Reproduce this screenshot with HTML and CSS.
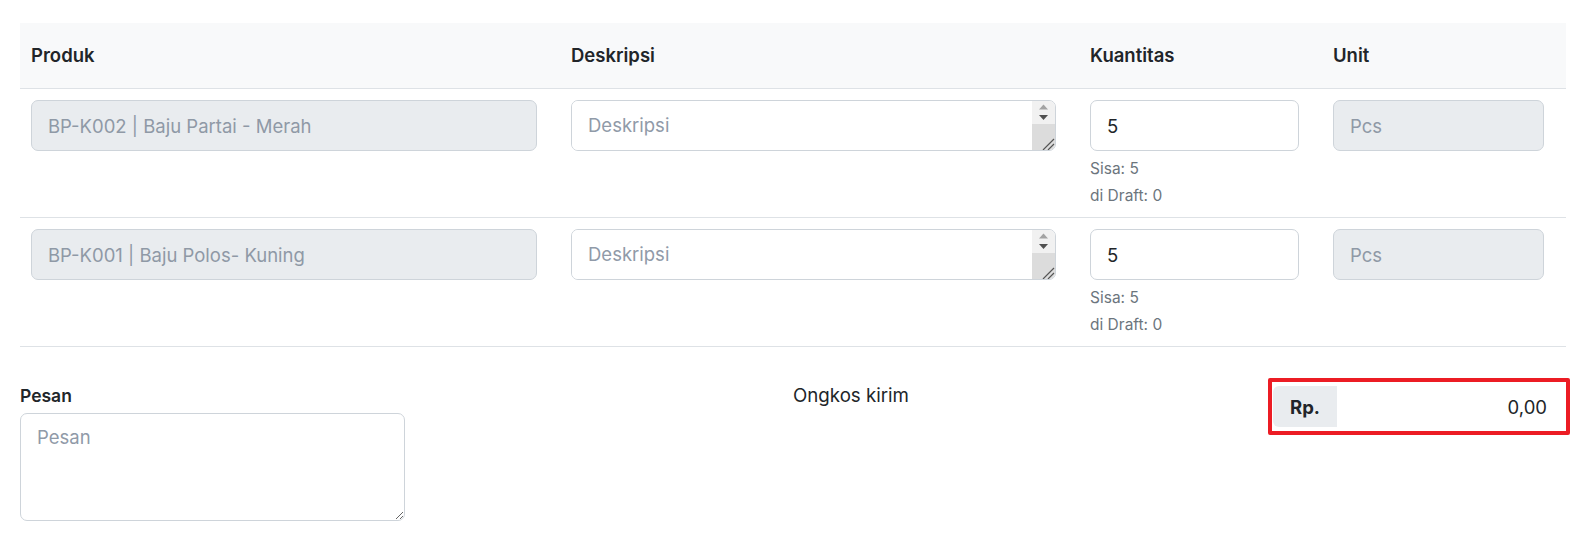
FILE: index.html
```html
<!DOCTYPE html>
<html>
<head>
  <meta charset="utf-8">
  <link rel="stylesheet" href="styles.css">
</head>
<body>
  <div class="page">
    <div class="items">
      <div class="items-head">
        <div>Produk</div>
        <div>Deskripsi</div>
        <div>Kuantitas</div>
        <div>Unit</div>
      </div>

      <div class="item-row">
        <div class="cell">
          <input type="text" class="field field-disabled" value="BP-K002 | Baju Partai - Merah" disabled>
        </div>
        <div class="cell">
          <div class="desc-box">
            <textarea class="desc-input" placeholder="Deskripsi"></textarea>
            <div class="fake-scroll">
              <div class="scroll-track">
                <svg width="23" height="23" viewBox="0 0 23 23"><polygon points="7,8.5 11.5,3.5 16,8.5" fill="#a3a3a3"/><polygon points="7,14 16,14 11.5,19" fill="#505050"/></svg>
              </div>
              <div class="scroll-corner">
                <svg width="23" height="25" viewBox="0 0 23 25"><path d="M22 14 L11 25 M22 19 L16 25" stroke="#555" stroke-width="1.2" fill="none"/></svg>
              </div>
            </div>
          </div>
        </div>
        <div class="cell">
          <input type="text" class="field" value="5">
          <div class="stock-info first">Sisa: 5</div>
          <div class="stock-info">di Draft: 0</div>
        </div>
        <div class="cell">
          <input type="text" class="field field-disabled" value="Pcs" disabled>
        </div>
      </div>

      <div class="item-row">
        <div class="cell">
          <input type="text" class="field field-disabled" value="BP-K001 | Baju Polos- Kuning" disabled>
        </div>
        <div class="cell">
          <div class="desc-box">
            <textarea class="desc-input" placeholder="Deskripsi"></textarea>
            <div class="fake-scroll">
              <div class="scroll-track">
                <svg width="23" height="23" viewBox="0 0 23 23"><polygon points="7,8.5 11.5,3.5 16,8.5" fill="#a3a3a3"/><polygon points="7,14 16,14 11.5,19" fill="#505050"/></svg>
              </div>
              <div class="scroll-corner">
                <svg width="23" height="25" viewBox="0 0 23 25"><path d="M22 14 L11 25 M22 19 L16 25" stroke="#555" stroke-width="1.2" fill="none"/></svg>
              </div>
            </div>
          </div>
        </div>
        <div class="cell">
          <input type="text" class="field" value="5">
          <div class="stock-info first">Sisa: 5</div>
          <div class="stock-info">di Draft: 0</div>
        </div>
        <div class="cell">
          <input type="text" class="field field-disabled" value="Pcs" disabled>
        </div>
      </div>
    </div>

    <div class="summary">
      <div class="note-group">
        <label class="note-label">Pesan</label>
        <textarea class="note-input" placeholder="Pesan"></textarea>
      </div>
      <div class="shipping">
        <div class="shipping-label">Ongkos kirim</div>
        <div class="highlight-box">
          <div class="money-group">
            <span class="money-prefix">Rp.</span>
            <input type="text" class="money-input" value="0,00">
          </div>
        </div>
      </div>
    </div>
  </div>
</body>
</html>
```

FILE: styles.css
```css
body {
  margin: 0;
  font-family: Inter, 'Noto Sans', sans-serif;
  color: #212529;
  background-color: #fff;
}
.page {
  padding: 23px 19px 0 20px;
}
.items {
  width: 1546px;
}
.items-head, .item-row {
  display: grid;
  grid-template-columns: 506px 485px 209px 211px;
  column-gap: 34px;
  padding-left: 11px;
  padding-right: 22px;
  border-bottom: 1px solid #dee2e6;
}
.items-head {
  background-color: #f8f9fa;
  padding-top: 20px;
  padding-bottom: 20px;
  font-size: 18.5px;
  font-weight: 600;
  line-height: 25px;
}
.item-row {
  padding-top: 11px;
  padding-bottom: 9px;
  height: 129px;
  box-sizing: border-box;
}
.field {
  display: block;
  width: 100%;
  height: 51px;
  box-sizing: border-box;
  padding: 0 16px;
  font-family: Inter, 'Noto Sans', sans-serif;
  font-size: 18.5px;
  color: #212529;
  border: 1px solid #ced4da;
  border-radius: 7px;
  background-color: #fff;
  outline: none;
}
.field-disabled {
  background-color: #e9ecef;
  color: #8f99a6;
  -webkit-text-fill-color: #8f99a6;
  opacity: 1;
}
.desc-box {
  display: flex;
  height: 51px;
  box-sizing: border-box;
  border: 1px solid #ced4da;
  border-radius: 7px;
  overflow: hidden;
  background-color: #fff;
}
.desc-input {
  flex: 1;
  border: none;
  outline: none;
  resize: none;
  padding: 12px 16px;
  font-family: Inter, 'Noto Sans', sans-serif;
  font-size: 18.5px;
  line-height: 24px;
  overflow: hidden;
}
.desc-input::placeholder,
.note-input::placeholder {
  color: #909aa8;
}
.fake-scroll {
  width: 23px;
  display: flex;
  flex-direction: column;
}
.scroll-track {
  height: 23px;
  background-color: #f1f1f1;
}
.scroll-track svg,
.scroll-corner svg {
  display: block;
}
.scroll-corner {
  flex: 1;
  background-color: #dcdcdc;
  display: flex;
  align-items: flex-end;
  overflow: hidden;
}
.stock-info {
  font-size: 15.5px;
  line-height: 27px;
  color: #6c757d;
}
.stock-info.first {
  margin-top: 4px;
}
.summary {
  display: grid;
  grid-template-columns: 1fr 1fr;
  width: 1550px;
}
.note-group {
  padding-top: 37px;
}
.note-label {
  display: block;
  font-size: 17.5px;
  font-weight: 600;
  line-height: 24px;
  margin-bottom: 5px;
}
.note-input {
  display: block;
  width: 385px;
  height: 108px;
  box-sizing: border-box;
  padding: 11px 16px;
  font-family: Inter, 'Noto Sans', sans-serif;
  font-size: 18.5px;
  line-height: 24px;
  border: 1px solid #ced4da;
  border-radius: 7px;
  resize: vertical;
  outline: none;
}
.shipping {
  display: grid;
  grid-template-columns: 1fr 302px;
  align-items: start;
  padding-top: 31px;
}
.shipping-label {
  font-size: 18.7px;
  line-height: 24px;
  padding-top: 6px;
  margin-left: -2px;
}
.highlight-box {
  border: 4px solid #ec1c24;
  border-radius: 2px;
  padding: 4px 1px;
}
.money-group {
  display: flex;
  height: 41px;
}
.money-prefix {
  display: flex;
  align-items: center;
  padding: 0 17px;
  background-color: #e9ecef;
  border-radius: 6px 0 0 6px;
  font-size: 18.5px;
  font-weight: 700;
}
.money-input {
  flex: 1;
  min-width: 0;
  border: none;
  outline: none;
  text-align: right;
  padding: 0 18px 0 0;
  font-family: Inter, 'Noto Sans', sans-serif;
  font-size: 18.5px;
  color: #212529;
}
```
